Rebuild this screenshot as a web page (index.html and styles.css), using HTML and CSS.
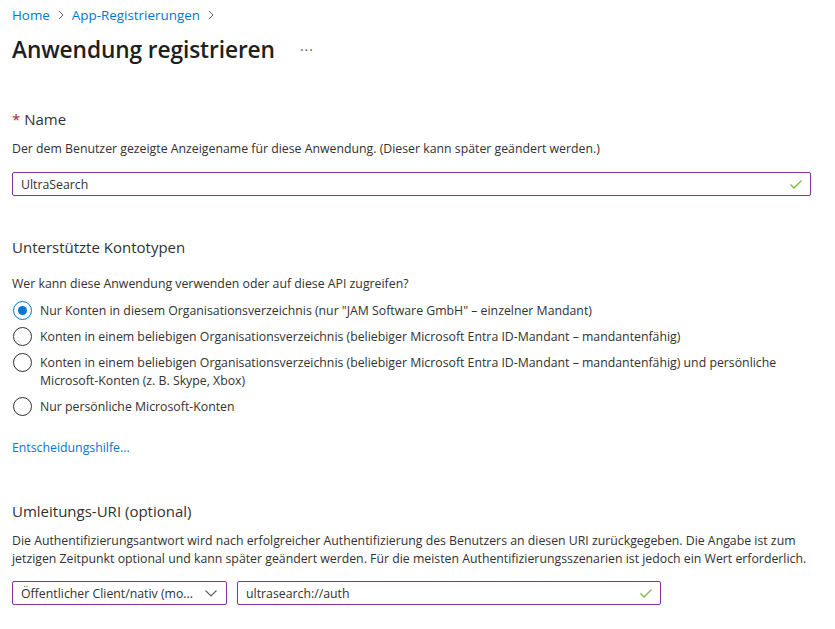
FILE: index.html
```html
<!DOCTYPE html>
<html lang="de">
<head>
<meta charset="utf-8">
<link rel="stylesheet" href="styles.css">
</head>
<body>
<nav class="crumbs">
  <a class="crumb">Home</a>
  <svg class="chev" width="12" height="12" viewBox="0 0 12 12"><path d="M4 2 L8 6 L4 10" fill="none" stroke="#605e5c" stroke-width="1"/></svg>
  <a class="crumb">App-Registrierungen</a>
  <svg class="chev" width="12" height="12" viewBox="0 0 12 12"><path d="M4 2 L8 6 L4 10" fill="none" stroke="#605e5c" stroke-width="1"/></svg>
</nav>
<header class="title-row">
  <h1 class="title">Anwendung registrieren</h1>
  <span class="more">···</span>
</header>

<section class="section name-section">
  <h2 class="heading"><span class="req">*</span> Name</h2>
  <p class="desc">Der dem Benutzer gezeigte Anzeigename für diese Anwendung. (Dieser kann später geändert werden.)</p>
  <div class="field field-wide">
    <span class="value">UltraSearch</span>
    <svg class="check" width="14" height="14" viewBox="0 0 14 14"><path d="M1.5 7.5 L5 11 L12.5 3.5" fill="none" stroke="#7fba3f" stroke-width="1.3"/></svg>
  </div>
</section>

<section class="section">
  <h2 class="heading">Unterstützte Kontotypen</h2>
  <p class="desc q">Wer kann diese Anwendung verwenden oder auf diese API zugreifen?</p>
  <ul class="radios">
    <li class="radio checked"><span class="circle"></span><span class="label">Nur Konten in diesem Organisationsverzeichnis (nur "JAM Software GmbH" – einzelner Mandant)</span></li>
    <li class="radio"><span class="circle"></span><span class="label">Konten in einem beliebigen Organisationsverzeichnis (beliebiger Microsoft Entra ID-Mandant – mandantenfähig)</span></li>
    <li class="radio"><span class="circle"></span><span class="label">Konten in einem beliebigen Organisationsverzeichnis (beliebiger Microsoft Entra ID-Mandant – mandantenfähig) und persönliche Microsoft-Konten (z. B. Skype, Xbox)</span></li>
    <li class="radio"><span class="circle"></span><span class="label">Nur persönliche Microsoft-Konten</span></li>
  </ul>
  <a class="link">Entscheidungshilfe...</a>
</section>

<section class="section uri-section">
  <h2 class="heading">Umleitungs-URI (optional)</h2>
  <p class="desc">Die Authentifizierungsantwort wird nach erfolgreicher Authentifizierung des Benutzers an diesen URI zurückgegeben. Die Angabe ist zum jetzigen Zeitpunkt optional und kann später geändert werden. Für die meisten Authentifizierungsszenarien ist jedoch ein Wert erforderlich.</p>
  <div class="uri-row">
    <div class="field field-select">
      <span class="value">Öffentlicher Client/nativ (mo...</span>
      <svg class="caret" width="14" height="14" viewBox="0 0 14 14"><path d="M1.5 4.5 L7 10 L12.5 4.5" fill="none" stroke="#605e5c" stroke-width="1.1"/></svg>
    </div>
    <div class="field field-uri">
      <span class="value">ultrasearch://auth</span>
      <svg class="check" width="14" height="14" viewBox="0 0 14 14"><path d="M1.5 7.5 L5 11 L12.5 3.5" fill="none" stroke="#7fba3f" stroke-width="1.3"/></svg>
    </div>
  </div>
</section>
</body>
</html>
```
FILE: styles.css
```css
* { box-sizing: border-box; }
html, body { margin: 0; padding: 0; background: #ffffff; }
body {
  font-family: "Open Sans", "Noto Sans", "Liberation Sans", sans-serif;
  font-size: 12.3px;
  color: #323130;
  padding: 0 12px;
}
.crumbs {
  display: flex;
  align-items: center;
  gap: 5px;
  height: 18px;
  margin-top: 6px;
  font-size: 13.4px;
}
.crumb { color: #0078d4; }
.chev { display: block; }
.title-row {
  display: flex;
  align-items: center;
  margin-top: 9px;
  height: 32px;
}
.title {
  margin: 0;
  font-size: 22.7px;
  font-weight: 600;
  color: #201f1e;
  letter-spacing: -0.1px;
}
.more {
  margin-left: 25px;
  font-size: 14px;
  color: #605e5c;
  letter-spacing: 1px;
}
.section { margin: 0; }
.name-section { margin-top: 44px; }
.heading {
  margin: 0;
  font-size: 15px;
  font-weight: 400;
  color: #323130;
  line-height: 20px;
}
.req { color: #a4262c; }
.desc { margin: 11px 0 0; line-height: 18px; }
.field {
  display: flex;
  align-items: center;
  justify-content: space-between;
  height: 24px;
  border: 1px solid #8a2da5;
  border-radius: 2px;
  padding: 0 7px 0 8px;
  color: #323130;
}
.field-wide { margin-top: 14px; width: 799px; }
.name-section + .section { margin-top: 41px; }
.q { margin-top: 18px; }
.radios { list-style: none; margin: 8px 0 0; padding: 0; }
.radio { display: flex; align-items: flex-start; margin-bottom: 7px; line-height: 18px; }
.circle {
  flex: none;
  width: 19px;
  height: 19px;
  border: 1px solid #323130;
  border-radius: 50%;
  margin: 0 8px 0 1px;
  position: relative;
}
.checked .circle { border-color: #0078d4; }
.checked .circle::after {
  content: "";
  position: absolute;
  left: 4px; top: 4px;
  width: 9px; height: 9px;
  border-radius: 50%;
  background: #0078d4;
}
.label { padding-top: 1px; }
.link { display: block; color: #0078d4; margin-top: 23px; line-height: 18px; }
.uri-section { margin-top: 44px; }
.uri-section .desc { margin-top: 11px; }
.uri-row { display: flex; gap: 10px; margin-top: 13px; }
.field-select { width: 215px; }
.field-uri { width: 424px; }
.caret { margin-right: 1px; }
```
